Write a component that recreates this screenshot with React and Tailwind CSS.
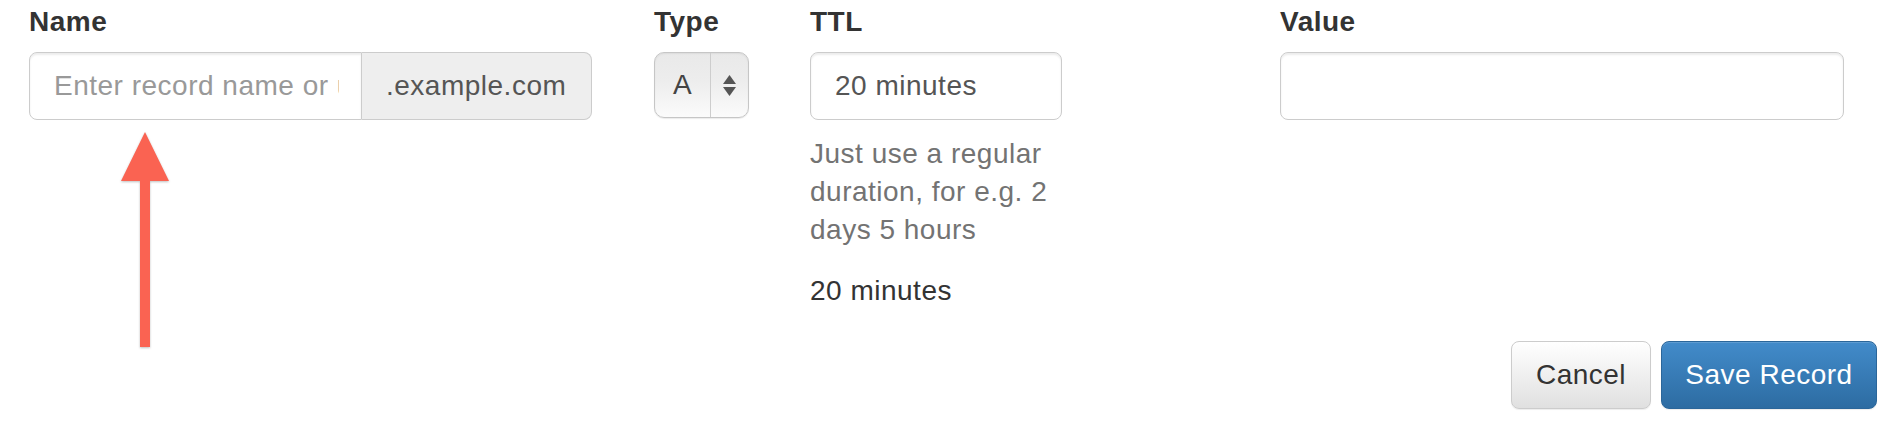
import React from 'react';

const inputBase =
  "h-[68px] border border-[#ccc] bg-white pl-[24px] text-[28px] tracking-[0.5px] text-[#555] shadow-[inset_0_2px_2px_rgba(0,0,0,0.075)] outline-none placeholder:text-[#999]";

const Label = ({ children }) => (
  <label className="block mb-[10px] text-[28px] leading-[40px] font-bold text-[#333]">{children}</label>
);

const TypeSelect = () => (
  <div className="flex h-[66px] w-[95px] mt-[1px] rounded-[10px] border border-[#c6c6c6] bg-[linear-gradient(to_bottom,#e9e9e9,#ededed_45%,#fbfbfb)] shadow-[inset_0_1px_2px_rgba(0,0,0,0.06),0_1px_1px_rgba(0,0,0,0.08)] text-[28px] text-[#444]">
    <div className="flex w-[56px] items-center justify-center border-r border-[#cdcdcd]">A</div>
    <div className="flex flex-1 flex-col items-center justify-center gap-[3px]">
      <svg width="13" height="9" viewBox="0 0 13 9"><path d="M6.5 0L13 9H0z" fill="#555" /></svg>
      <svg width="13" height="9" viewBox="0 0 13 9"><path d="M0 0h13L6.5 9z" fill="#555" /></svg>
    </div>
  </div>
);

const Arrow = () => (
  <svg
    className="absolute left-[119px] top-[130px] drop-shadow-[0_1px_1px_rgba(0,0,0,0.25)]"
    width="52"
    height="220"
    viewBox="0 0 52 220"
  >
    <path d="M26 2L50 51H31V217H21V51H2z" fill="#fa6352" />
  </svg>
);

export default function App() {
  return (
    <div className="relative h-[426px] w-full bg-white pt-[2px] pl-[29px] pr-[15px] font-['Liberation_Sans','Helvetica',Arial,sans-serif] leading-[40px] tracking-[0.5px]">
      <div className="flex">
        {/* Name */}
        <div className="w-[563px]">
          <Label>Name</Label>
          <div className="flex">
            <input
              className={`${inputBase} pr-[22px] w-[333px] rounded-l-[8px] min-w-0`}
              placeholder="Enter record name or use @ for root"
            />
            <span className="flex h-[68px] flex-1 items-center rounded-r-[8px] border border-l-0 border-[#ccc] bg-[#eee] px-[24px] text-[28px] text-[#555]">
              .example.com
            </span>
          </div>
        </div>

        {/* Type */}
        <div className="ml-[62px] w-[95px]">
          <Label>Type</Label>
          <TypeSelect />
        </div>

        {/* TTL */}
        <div className="ml-[61px] w-[470px]">
          <Label>TTL</Label>
          <input className={`${inputBase} pr-[24px] w-[252px] rounded-[8px]`} defaultValue="20 minutes" />
          <p className="mt-[15px] mb-[22px] w-[260px] text-[28px] leading-[38px] text-[#737373]">
            Just use a regular duration, for e.g. 2 days 5 hours
          </p>
          <p className="text-[28px] leading-[40px] text-[#333]">20 minutes</p>
        </div>

        {/* Value */}
        <div className="w-[564px]">
          <Label>Value</Label>
          <input className={`${inputBase} pr-[24px] w-full rounded-[8px]`} />
        </div>
      </div>

      <div className="mt-[30px] flex justify-end gap-[10px]">
        <button className="h-[68px] w-[140px] rounded-[8px] border border-[#ccc] bg-[linear-gradient(to_bottom,#fff,#e0e0e0)] text-[28px] text-[#333] shadow-[inset_0_1px_0_rgba(255,255,255,0.15),0_1px_1px_rgba(0,0,0,0.075)]">
          Cancel
        </button>
        <button className="h-[68px] w-[216px] rounded-[8px] border border-[#2b669a] bg-[linear-gradient(to_bottom,#428bca,#2d6ca2)] text-[28px] text-white shadow-[inset_0_1px_0_rgba(255,255,255,0.15),0_1px_1px_rgba(0,0,0,0.075)]">
          Save Record
        </button>
      </div>

      <Arrow />
    </div>
  );
}
